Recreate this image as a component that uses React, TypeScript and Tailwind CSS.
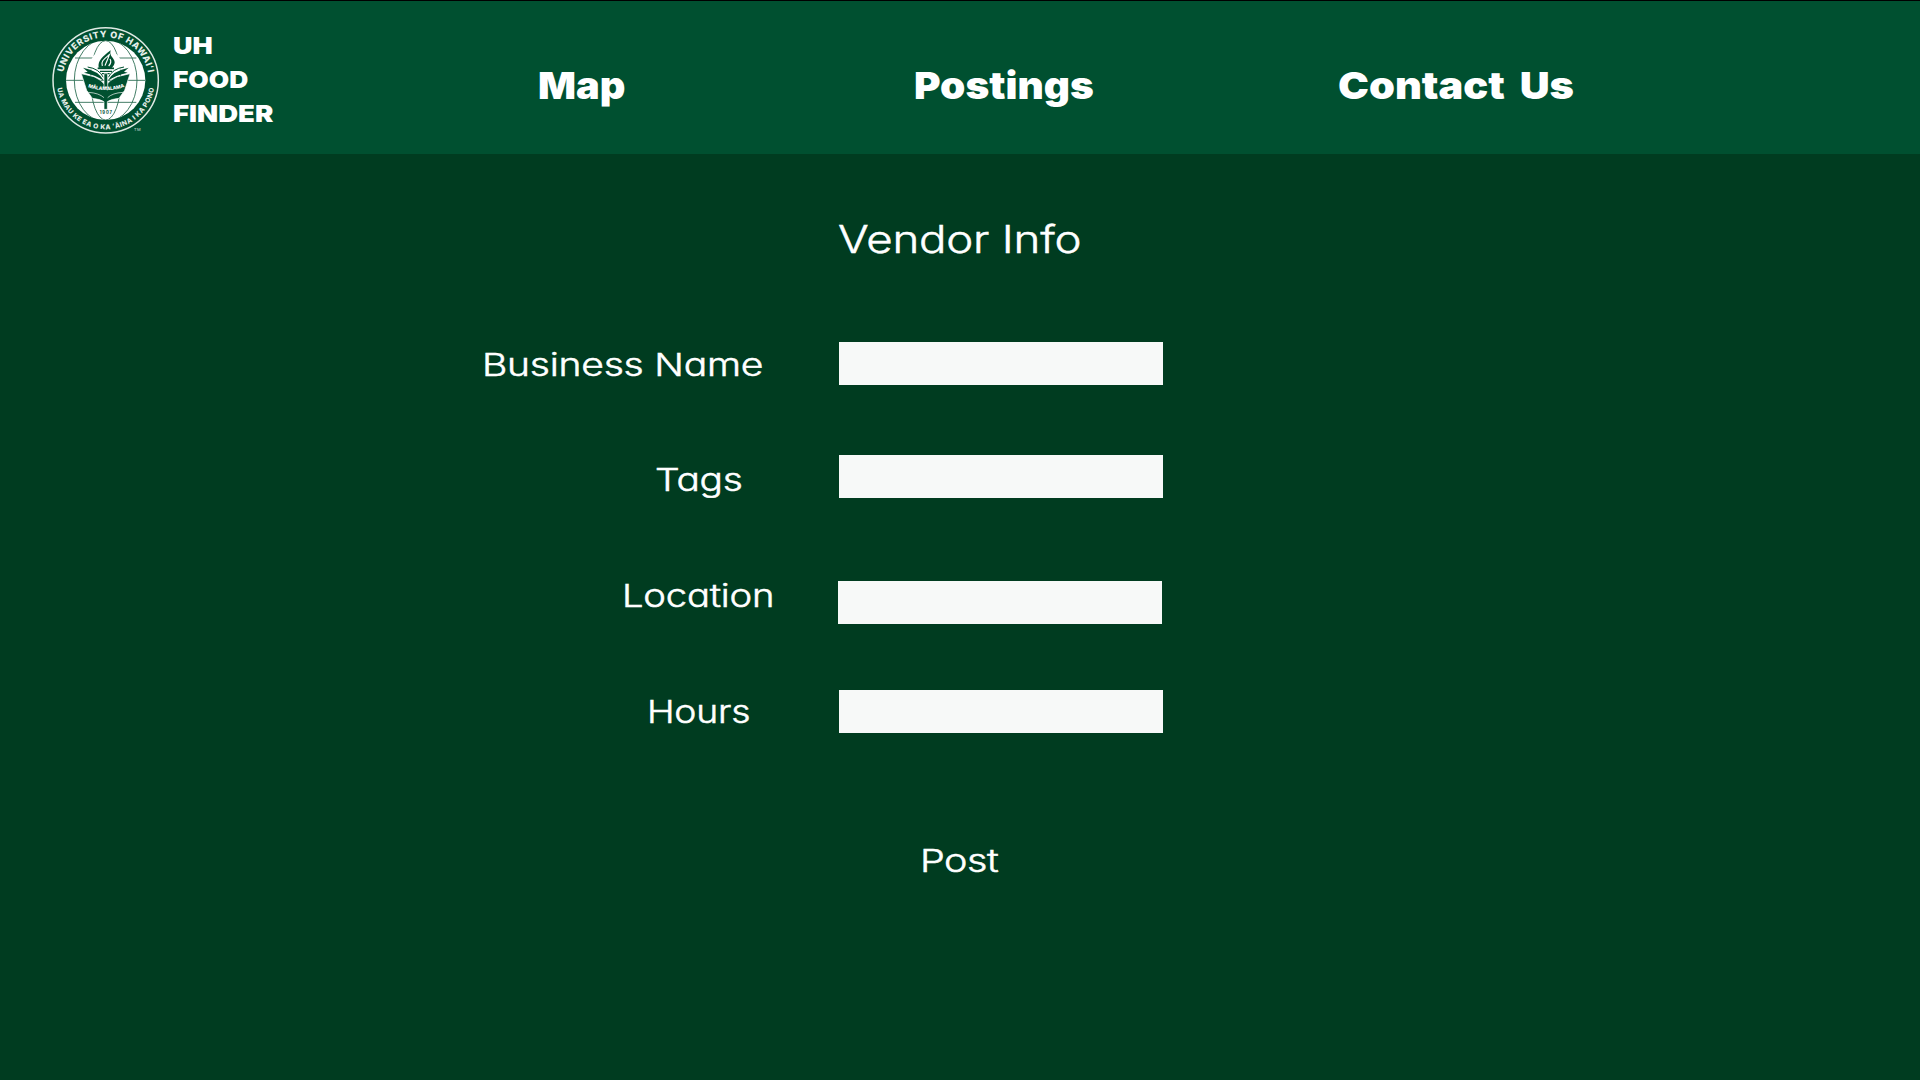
import React from "react";

const GREEN = "#005030";

function Seal() {
  return (
    <svg viewBox="0 0 390 390" className="h-[130px] w-[130px] shrink-0" aria-label="University of Hawaii seal">
      <defs>
        <path id="arc-top" d="M 68 196 A 129 129 0 0 1 326 196" />
        <path id="arc-bottom" d="M 50 196 A 147 147 0 0 0 344 196" />
        <path id="motto" d="M140 215Q197 236 256 215" />
        <clipPath id="globe"><circle cx="197" cy="196" r="119" /></clipPath>
      </defs>
      <circle cx="197" cy="196" r="158" fill="none" stroke="#dfeae4" strokeWidth="4.5" />
      <circle cx="197" cy="196" r="119" fill="#fff" />
      <g clipPath="url(#globe)" fill="none" stroke={GREEN} strokeWidth="2.6" opacity="0.85">
        <ellipse cx="197" cy="196" rx="45" ry="119" />
        <ellipse cx="197" cy="196" rx="94" ry="125" />
        <path d="M78 196H316M105 129H289M105 262H289" />
      </g>
      <path d="M155 172L150 140Q165 105 197 100Q230 105 245 140L240 172Z" fill="#fff" />
      <path d="M176 158C173 137 187 125 212 106C206 124 225 130 224 143C223 150 219 154 214 160Z" fill={GREEN} />
      <path d="M187 153C181 139 194 131 208 119C205 130 201 136 195 152M206 153C213 145 214 138 210 132" fill="none" stroke="#fff" strokeWidth="3.5" />
      <path d="M173 160H222" stroke={GREEN} strokeWidth="5" />
      <path d="M180 169H216M186 176H209" stroke={GREEN} strokeWidth="4" />
      <path d="M124 176L162 185Q184 194 197 212Q210 194 232 185L270 176L254 226L237 250Q214 252 202 260V283H192V260Q180 252 157 250L140 226Z" fill={GREEN} stroke="#fff" strokeWidth="2" />
      <path d="M129 158Q176 167 192 197Q168 181 132 173L143 170Z M266 158Q219 167 203 197Q227 181 263 173L252 170Z" fill={GREEN} />
      <path d="M143 156Q177 161 190 187M252 156Q218 161 205 187" fill="none" stroke={GREEN} strokeWidth="3" />
      <path d="M192 176H203V217H192Z" fill={GREEN} stroke="#fff" strokeWidth="2" />
      <path d="M145 232Q177 234 192 248M249 232Q217 234 203 248" fill="none" stroke="#fff" strokeWidth="2" />
      <text fill="#fff" fontFamily="Inter, sans-serif" fontWeight="800" fontSize="14.5">
        <textPath href="#motto" textLength="112" startOffset="4">MĀLAMALAMA</textPath>
      </text>
      <rect x="177" y="287" width="40" height="14" fill="#fff" />
      <text x="179" y="298" fill={GREEN} fontFamily="Inter, sans-serif" fontWeight="700" fontSize="12.5" textLength="37">1907</text>
      <g fill="#e6efea" fontFamily="Inter, sans-serif" fontWeight="800">
        <text fontSize="27">
          <textPath href="#arc-top" startOffset="24" textLength="358">UNIVERSITY OF HAWAIʻI</textPath>
        </text>
        <text fontSize="20">
          <textPath href="#arc-bottom" startOffset="24" textLength="414">UA MAU KE EA O KA ʻĀINA I KA PONO</textPath>
        </text>
        <text x="282" y="348" fontSize="12" fontWeight="500" textLength="20" opacity="0.7">TM</text>
      </g>
    </svg>
  );
}

const brand = [
  { word: "UH", stretch: "scale-x-[1.15]" },
  { word: "FOOD", stretch: "scale-x-[1.125]" },
  { word: "FINDER", stretch: "scale-x-[1.175]" },
];

const nav = [
  { label: "Map", place: "ml-[252px] w-[376px]", stretch: "scale-x-[1.06]" },
  { label: "Postings", place: "w-[424px]", stretch: "scale-x-[1.08]" },
  { label: "Contact Us", place: "w-[300px]", stretch: "scale-x-[1.105] [word-spacing:6px]" },
];

const fields = [
  { label: "Business Name", row: "mt-[63px]", pad: "pl-[482px] pt-[2px]", stretch: "scale-x-[1.235]", input: "" },
  { label: "Tags", row: "mt-[70px]", pad: "pl-[654.5px] pt-[6px]", stretch: "scale-x-[1.23]", input: "" },
  { label: "Location", row: "mt-[83px]", pad: "pl-[622px] pb-[14px]", stretch: "scale-x-[1.21]", input: "-ml-px" },
  { label: "Hours", row: "mt-[66px]", pad: "pl-[647px]", stretch: "scale-x-[1.18]", input: "" },
];

export default function App() {
  return (
    <div className="flex h-[1080px] w-[1920px] flex-col overflow-hidden bg-[#003c20] text-white">
      <header className="flex h-[154px] shrink-0 border-t border-black bg-[#005030] font-[Inter,sans-serif] font-black">
        <div className="flex pt-[14px] pl-[40px]">
          <Seal />
          <div className="w-[115px] pt-[14px] pl-[2.5px] text-[23.4px] leading-[34px]">
            {brand.map((b) => (
              <div key={b.word} className={`origin-left ${b.stretch}`}>{b.word}</div>
            ))}
          </div>
        </div>
        <nav className="ml-px flex pt-[65px] text-[37.5px] leading-[40px] whitespace-nowrap">
          {nav.map((n) => (
            <a key={n.label} className={n.place}>
              <span className={`inline-block origin-left ${n.stretch}`}>{n.label}</span>
            </a>
          ))}
        </nav>
      </header>
      <main className="font-[Inter,sans-serif] font-light tracking-[-0.012em] whitespace-nowrap [-webkit-text-stroke:0.5px_white] [font-feature-settings:'cv11']">
        <h1 className="mt-[60px] ml-[838px] w-fit origin-left scale-x-[1.185] text-[38.5px] leading-[50px]">Vendor Info</h1>
        <form className="pt-[15px]">
          {fields.map((f) => (
            <div key={f.label} className={`flex h-[43px] ${f.row}`}>
              <label className={`flex w-[839px] shrink-0 items-center text-[31.6px] leading-none ${f.pad}`}>
                <span className={`origin-left ${f.stretch}`}>{f.label}</span>
              </label>
              <input className={`h-[43px] w-[324px] bg-[#f7f9f8] outline-none ${f.input}`} />
            </div>
          ))}
          <button type="button" className="mt-[108px] ml-[920px] block origin-left scale-x-[1.25] text-[31.6px] leading-[40px] tracking-[-0.012em]">
            Post
          </button>
        </form>
      </main>
    </div>
  );
}
